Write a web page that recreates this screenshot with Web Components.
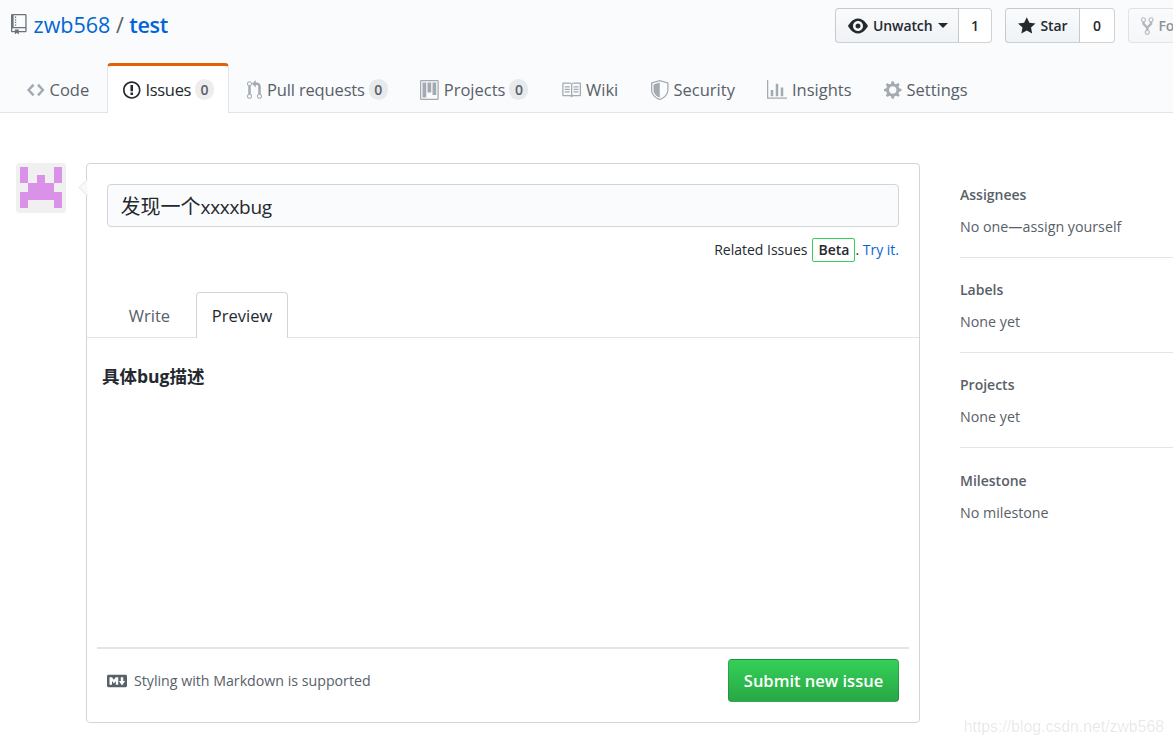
<!DOCTYPE html>
<html lang="en">
<head>
<meta charset="utf-8">
<title>zwb568 / test - new issue</title>
<style>
  html, body { margin: 0; height: 745px; overflow: hidden; background: #fff; }
  body { font-family: "Open Sans", "Noto Sans CJK SC", sans-serif; color: #24292e; font-size: 16.5px; }
</style>
</head>
<body>
<repo-header>
  <repo-title slot="title" owner="zwb568" name="test"></repo-title>
  <count-button slot="actions" icon="eye" label="Unwatch" count="1" w="124" cw="33" caret></count-button>
  <count-button slot="actions" icon="star" label="Star" count="0" w="75" cw="35"></count-button>
  <count-button slot="actions" icon="fork" label="Fork" w="90" disabled></count-button>
  <nav-tab slot="tabs" icon="code" w="98">Code</nav-tab>
  <nav-tab slot="tabs" icon="issue" w="122" count="0" ls="-.33" selected>Issues</nav-tab>
  <nav-tab slot="tabs" icon="pull" w="173" count="0" ls="-.15">Pull requests</nav-tab>
  <nav-tab slot="tabs" icon="project" w="141" count="0">Projects</nav-tab>
  <nav-tab slot="tabs" icon="book" w="90">Wiki</nav-tab>
  <nav-tab slot="tabs" icon="shield" w="116">Security</nav-tab>
  <nav-tab slot="tabs" icon="graph" w="117">Insights</nav-tab>
  <nav-tab slot="tabs" icon="gear" w="120">Settings</nav-tab>
</repo-header>
<issue-page>
  <user-avatar slot="avatar"></user-avatar>
  <issue-form slot="form" issue-title="发现一个" issue-title-latin="xxxxbug">具体bug描述</issue-form>
  <side-item slot="side" heading="Assignees">No one—assign yourself</side-item>
  <side-item slot="side" heading="Labels">None yet</side-item>
  <side-item slot="side" heading="Projects">None yet</side-item>
  <side-item slot="side" heading="Milestone" last>No milestone</side-item>
</issue-page>
<water-mark>https://blog.csdn.net/zwb568</water-mark>

<script>
const ICONS = {
  repo: ['0 0 12 16', 'M4 9H3V8h1v1zm0-3H3v1h1V6zm0-2H3v1h1V4zm0-2H3v1h1V2zm8-1v12c0 .55-.45 1-1 1H6v2l-1.5-1.5L3 16v-2H1c-.55 0-1-.45-1-1V1c0-.55.45-1 1-1h10c.55 0 1 .45 1 1zm-1 10H1v2h2v-1h3v1h5v-2zm0-10H2v9h9V1z'],
  code: ['0 0 14 16', 'M9.5 3L8 4.5 11.5 8 8 11.5 9.5 13 14 8 9.5 3zm-5 0L0 8l4.5 5L6 11.5 2.5 8 6 4.5 4.5 3z'],
  issue: ['0 0 14 16', 'M7 2.3c3.14 0 5.7 2.56 5.7 5.7s-2.56 5.7-5.7 5.7A5.71 5.71 0 0 1 1.3 8c0-3.14 2.56-5.7 5.7-5.7zM7 1C3.14 1 0 4.14 0 8s3.14 7 7 7 7-3.14 7-7-3.14-7-7-7zm1 3H6v5h2V4zm0 6H6v2h2v-2z'],
  pull: ['0 0 12 16', 'M11 11.28V5c-.03-.78-.34-1.47-.94-2.06C9.46 2.35 8.78 2.03 8 2H7V0L4 3l3 3V4h1c.27.02.48.11.69.31.21.2.3.42.31.69v6.28A1.993 1.993 0 0 0 10 15a1.993 1.993 0 0 0 1-3.72zm-1 2.92c-.66 0-1.2-.55-1.2-1.2 0-.65.55-1.2 1.2-1.2.65 0 1.2.55 1.2 1.2 0 .65-.55 1.2-1.2 1.2zM4 3c0-1.11-.89-2-2-2a1.993 1.993 0 0 0-1 3.72v6.56A1.993 1.993 0 0 0 2 15a1.993 1.993 0 0 0 1-3.72V4.72c.59-.34 1-.98 1-1.72zm-.8 10c0 .66-.55 1.2-1.2 1.2-.65 0-1.2-.55-1.2-1.2 0-.65.55-1.2 1.2-1.2.65 0 1.2.55 1.2 1.2zM2 4.2C1.34 4.2.8 3.65.8 3c0-.65.55-1.2 1.2-1.2.65 0 1.2.55 1.2 1.2 0 .65-.55 1.2-1.2 1.2z'],
  project: ['0 0 15 16', 'M10 12h3V2h-3v10zm-4-2h3V2H6v8zm-4 4h3V2H2v12zm-1 1h13V1H1v14zM14 0H1a1 1 0 0 0-1 1v14a1 1 0 0 0 1 1h13a1 1 0 0 0 1-1V1a1 1 0 0 0-1-1z'],
  book: ['0 0 16 16', 'M3 5h4v1H3V5zm0 3h4V7H3v1zm0 2h4V9H3v1zm11-5h-4v1h4V5zm0 2h-4v1h4V7zm0 2h-4v1h4V9zm2-6v9c0 .55-.45 1-1 1H9.5l-1 1-1-1H2c-.55 0-1-.45-1-1V3c0-.55.45-1 1-1h5.5l1 1 1-1H15c.55 0 1 .45 1 1zm-8 .5L7.5 3H2v9h6V3.5zm7-.5H9.5l-.5.5V12h6V3z'],
  shield: ['0 0 14 16', 'M0 2l7-2 7 2v6.02C14 12.69 8.69 16 7 16c-1.69 0-7-3.31-7-7.98V2zm1 .75L7 1l6 1.75v5.268C13 12.104 8.449 15 7 15c-1.449 0-6-2.896-6-6.982V2.75zm1 .75L7 2v12c-1.207 0-5-2.482-5-5.985V3.5z'],
  graph: ['0 0 16 16', 'M16 14v1H0V0h1v14h15zM5 13H3V8h2v5zm4 0H7V3h2v10zm4 0h-2V6h2v7z'],
  gear: ['0 0 14 16', 'M14 8.77v-1.6l-1.94-.64-.45-1.09.88-1.84-1.13-1.13-1.81.91-1.09-.45-.69-1.92h-1.6l-.63 1.94-1.11.45-1.84-.88-1.13 1.13.91 1.81-.45 1.09L0 7.23v1.59l1.94.64.45 1.09-.88 1.84 1.13 1.13 1.81-.91 1.09.45.69 1.92h1.59l.63-1.94 1.11-.45 1.84.88 1.13-1.13-.92-1.81.47-1.09L14 8.75v.02zM7 11c-1.66 0-3-1.34-3-3s1.34-3 3-3 3 1.34 3 3-1.34 3-3 3z'],
  eye: ['0 0 16 16', 'M8.06 2C3 2 0 8 0 8s3 6 8.06 6C13 14 16 8 16 8s-3-6-7.94-6zM8 12c-2.2 0-4-1.78-4-4 0-2.2 1.8-4 4-4 2.22 0 4 1.8 4 4 0 2.22-1.78 4-4 4zm2-4c0 1.11-.89 2-2 2-1.11 0-2-.89-2-2 0-1.11.89-2 2-2 1.11 0 2 .89 2 2z'],
  star: ['0 0 14 16', 'M14 6l-4.9-.64L7 1 4.9 5.36 0 6l3.6 3.26L2.67 14 7 11.67 11.33 14l-.93-4.74L14 6z'],
  fork: ['0 0 10 16', 'M8 1a1.993 1.993 0 0 0-1 3.72V6L5 8 3 6V4.72A1.993 1.993 0 0 0 2 1a1.993 1.993 0 0 0-1 3.72V6.5l3 3v1.78A1.993 1.993 0 0 0 5 15a1.993 1.993 0 0 0 1-3.72V9.5l3-3V4.72A1.993 1.993 0 0 0 8 1zM2 4.2C1.34 4.2.8 3.65.8 3c0-.65.55-1.2 1.2-1.2.65 0 1.2.55 1.2 1.2 0 .65-.55 1.2-1.2 1.2zm3 10c-.66 0-1.2-.55-1.2-1.2 0-.65.55-1.2 1.2-1.2.65 0 1.2.55 1.2 1.2 0 .65-.55 1.2-1.2 1.2zm3-10c-.66 0-1.2-.55-1.2-1.2 0-.65.55-1.2 1.2-1.2.65 0 1.2.55 1.2 1.2 0 .65-.55 1.2-1.2 1.2z'],
  markdown: ['0 0 16 16', 'M14.85 3H1.15C.52 3 0 3.52 0 4.15v7.69C0 12.48.52 13 1.15 13h13.69c.64 0 1.15-.52 1.15-1.15v-7.7C16 3.52 15.48 3 14.85 3zM9 11H7V8L5.5 9.92 4 8v3H2V5h2l1.5 2L7 5h2v6zm2.99.5L9.5 8H11V5h2v3h1.5l-2.51 3.5z']
};

// octicons are drawn at 1.25x because the screenshot was taken zoomed in
function icon(name, color, scale = 1.25) {
  const [box, d] = ICONS[name];
  const [, , w, h] = box.split(' ').map(Number);
  return `<svg width="${w * scale}" height="${h * scale}" viewBox="${box}" fill="${color}" style="display:block;flex:none"><path fill-rule="evenodd" d="${d}"/></svg>`;
}

class Base extends HTMLElement {
  render(html) {
    if (!this.shadowRoot) this.attachShadow({ mode: 'open' });
    this.shadowRoot.innerHTML = html;
  }
}

class RepoHeader extends Base {
  connectedCallback() {
    this.render(`
      <style>
        :host { display: flex; flex-direction: column; justify-content: space-between; box-sizing: border-box; height: 113px; background: #fafbfc; border-bottom: 1px solid #e1e4e8; }
        .top { display: grid; grid-template-columns: 824px max-content; padding: 8px 0 0 11px; }
        .actions { display: flex; gap: 13px; }
        .tabs { display: flex; padding-left: 9px; height: 50px; }
      </style>
      <div class="top"><slot name="title"></slot><div class="actions"><slot name="actions"></slot></div></div>
      <div class="tabs"><slot name="tabs"></slot></div>`);
  }
}

class RepoTitle extends Base {
  connectedCallback() {
    this.render(`
      <style>
        :host { display: flex; align-items: center; gap: 7px; height: 35px; font-size: 21.5px; color: #586069; }
        a { color: #0366d6; text-decoration: none; }
        b { font-weight: 600; letter-spacing: -.3px; }
        .path { display: flex; gap: 5.5px; margin-top: -2px; }
        svg { margin-top: -3px; }
      </style>
      ${icon('repo', '#6a737d', 1.3)}
      <div class="path"><a>${this.getAttribute('owner')}</a><span>/</span><a><b>${this.getAttribute('name')}</b></a></div>`);
  }
}

class CountButton extends Base {
  connectedCallback() {
    const off = this.hasAttribute('disabled');
    const count = this.getAttribute('count');
    const caret = this.hasAttribute('caret') ? '<i class="caret"></i>' : '';
    this.render(`
      <style>
        :host { display: flex; height: 35px; font-size: 14px; font-weight: 600; letter-spacing: -.1px; color: #24292e; ${off ? 'opacity: .5;' : ''} }
        .btn { display: flex; align-items: center; gap: 5px; width: ${this.getAttribute('w')}px; padding-left: 12px; box-sizing: border-box; background: linear-gradient(#fafbfc, #eff3f6); border: 1px solid rgba(27,31,35,.2); border-radius: 4px 0 0 4px; white-space: nowrap; }
        .count { display: flex; align-items: center; justify-content: center; box-sizing: border-box; width: ${this.getAttribute('cw')}px; background: #fff; border: 1px solid rgba(27,31,35,.2); border-left: 0; border-radius: 0 4px 4px 0; }
        .caret { width: 0; height: 0; border: 5px solid transparent; border-top-color: #24292e; border-bottom: 0; }
      </style>
      <div class="btn">${icon(this.getAttribute('icon'), off ? '#6a737d' : '#24292e')}<span>${this.getAttribute('label')}</span>${caret}</div>
      ${count ? `<div class="count">${count}</div>` : ''}`);
  }
}

class NavTab extends Base {
  connectedCallback() {
    const sel = this.hasAttribute('selected');
    const count = this.getAttribute('count');
    const ls = this.getAttribute('ls') || 0;
    this.render(`
      <style>
        :host { display: flex; align-items: center; box-sizing: border-box; flex: none; width: ${this.getAttribute('w')}px; gap: 5px; padding: ${sel ? '0' : '5px'} 0 0 ${sel ? '15px' : '18px'}; font-size: 16.5px; color: ${sel ? '#24292e' : '#586069'}; white-space: nowrap;
          ${sel ? 'background: #fff; border: 1px solid #e1e4e8; border-top: 3px solid #e36209; border-bottom: 0; border-radius: 4px 4px 0 0; margin-top: 1px; height: 50px;' : ''} }
        .t { letter-spacing: ${ls}px; }
        .n { display: inline-block; min-width: 19px; box-sizing: border-box; text-align: center; line-height: 21px; font-size: 14px; font-weight: 600; padding: 0 2px; margin-left: -1px; border-radius: 11px; background: rgba(27,31,35,.08); color: #586069; }
      </style>
      ${icon(this.getAttribute('icon'), sel ? '#24292e' : '#a3aab1')}<span class="t"><slot></slot></span>${count ? `<span class="n">${count}</span>` : ''}`);
  }
}

class IssuePage extends Base {
  connectedCallback() {
    this.render(`
      <style>
        :host { display: flex; align-items: flex-start; padding: 50px 0 0 16px; }
        .side { flex: 1; margin-left: 40px; min-width: 0; }
      </style>
      <slot name="avatar"></slot>
      <slot name="form"></slot>
      <div class="side"><slot name="side"></slot></div>`);
  }
}

class UserAvatar extends Base {
  connectedCallback() {
    // 5x5 identicon, the left side mirrored on the right
    const cells = ['10001', '10101', '01110', '11111', '10001'];
    let rects = '';
    cells.forEach((row, y) => [...row].forEach((c, x) => {
      if (c === '1') rects += `<rect x="${x}" y="${y}" width="1" height="1"/>`;
    }));
    this.render(`
      <style>
        :host { display: block; width: 50px; height: 50px; flex: none; margin-right: 20px; background: #f0f0f0; border-radius: 4px; }
        svg { display: block; margin: 4px 0 0 4px; }
      </style>
      <svg width="42" height="41" viewBox="0 0 5 5" preserveAspectRatio="none" fill="#da92e8" shape-rendering="crispEdges">${rects}</svg>`);
  }
}

class IssueForm extends Base {
  connectedCallback() {
    this.render(`
      <style>
        :host { display: flex; flex-direction: column; position: relative; box-sizing: border-box; flex: none; width: 834px; height: 560px; padding-top: 20px; background: #fff; border: 1px solid #d1d5da; border-radius: 4px; }
        .caret { position: absolute; left: -6.5px; top: 16.5px; width: 13px; height: 13px; transform: rotate(45deg); background: #f8f9fa; border-left: 1px solid #e1e4e8; border-bottom: 1px solid #e1e4e8; box-sizing: border-box; clip-path: polygon(0 0, 0 100%, 100% 100%); }
        .title { display: flex; align-items: center; box-sizing: border-box; height: 43px; margin: 0 20px; padding: 0 0 0 12.5px; font-size: 20px; background: #fafbfc; border: 1px solid #d1d5da; border-radius: 4px; }
        .title span { font-size: 19px; letter-spacing: -.3px; }
        .related { display: flex; justify-content: flex-end; align-items: center; height: 24px; margin: 11px 20px 0; font-size: 14px; gap: 5px; }
        .related > span:not(.beta) { margin-top: -2px; }
        .beta { box-sizing: border-box; height: 24px; line-height: 22px; padding: 0 5px; font-weight: 600; border: 1px solid #34d058; border-radius: 2px; }
        .related a { color: #0366d6; }
        .tabbar { display: flex; height: 46px; margin-top: 30px; padding-left: 22px; border-bottom: 1px solid #e1e4e8; box-sizing: border-box; }
        .tab { display: flex; align-items: center; justify-content: center; box-sizing: border-box; height: 46px; font-size: 16.5px; color: #586069; }
        .write { width: 87px; padding-right: 6px; }
        .preview { width: 92px; color: #24292e; background: #fff; border: 1px solid #d1d5da; border-bottom: 0; border-radius: 4px 4px 0 0; }
        .body { flex: 1; padding: 26px 15px 0; font-size: 17.5px; font-weight: 700; line-height: 24px; }
        .foot { display: flex; align-items: center; justify-content: space-between; height: 75px; margin: 0 10px; box-sizing: border-box; padding: 10px 10px 20px; border-top: 2px solid #e1e4e8; }
        .hint { display: flex; align-items: center; gap: 7px; font-size: 14.2px; color: #586069; }
        .submit { display: flex; align-items: center; justify-content: center; box-sizing: border-box; width: 171px; height: 43px; font-size: 16.5px; font-weight: 600; color: #fff; background: linear-gradient(#34d058, #28a745); border: 1px solid rgba(27,31,35,.2); border-radius: 4px; }
      </style>
      <div class="caret"></div>
      <div class="title"><div>${this.getAttribute('issue-title')}<span>${this.getAttribute('issue-title-latin')}</span></div></div>
      <div class="related"><span>Related Issues</span><span class="beta">Beta</span><span style="margin-left:-5px">. <a>Try it.</a></span></div>
      <div class="tabbar"><div class="tab write">Write</div><div class="tab preview">Preview</div></div>
      <div class="body"><slot></slot></div>
      <div class="foot">
        <div class="hint">${icon('markdown', '#586069')}<span>Styling with Markdown is supported</span></div>
        <div class="submit">Submit new issue</div>
      </div>`);
  }
}

class SideItem extends Base {
  connectedCallback() {
    const last = this.hasAttribute('last');
    this.render(`
      <style>
        :host { display: block; box-sizing: border-box; height: 95px; padding-top: ${last ? 22 : 21}px; font-size: 14.25px; color: #586069; line-height: 22px; ${last ? '' : 'border-bottom: 1px solid #e1e4e8;'} }
        .h { font-weight: 600; font-size: 14px; margin-bottom: 10px; }
      </style>
      <div class="h">${this.getAttribute('heading')}</div>
      <div><slot></slot></div>`);
  }
}

class WaterMark extends Base {
  connectedCallback() {
    this.render(`
      <style>
        :host { position: absolute; right: 9px; top: 717px; font: 15.8px/20px "Liberation Sans", sans-serif; color: rgba(0,0,0,.1); }
      </style>
      <slot></slot>`);
  }
}

customElements.define('repo-header', RepoHeader);
customElements.define('repo-title', RepoTitle);
customElements.define('count-button', CountButton);
customElements.define('nav-tab', NavTab);
customElements.define('issue-page', IssuePage);
customElements.define('user-avatar', UserAvatar);
customElements.define('issue-form', IssueForm);
customElements.define('side-item', SideItem);
customElements.define('water-mark', WaterMark);
</script>
</body>
</html>
